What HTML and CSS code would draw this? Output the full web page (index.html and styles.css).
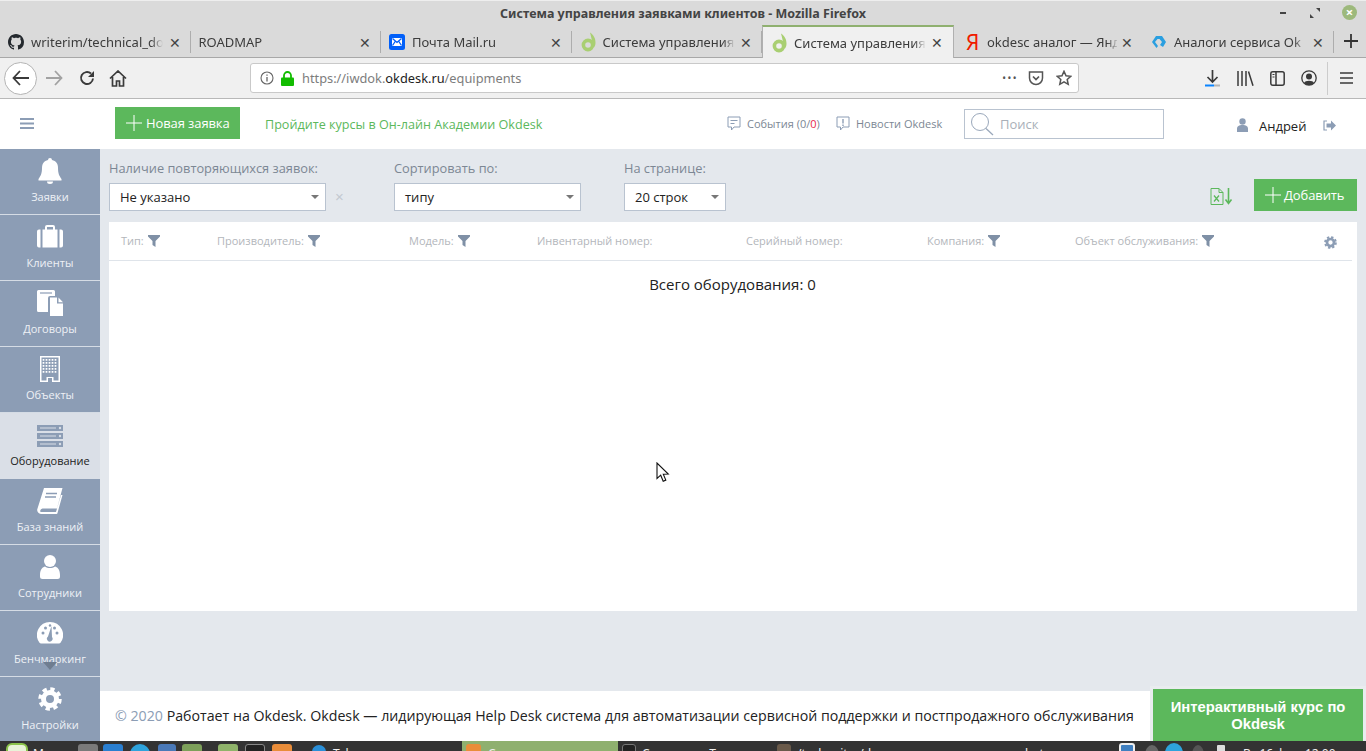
FILE: index.html
```html
<!doctype html>
<html lang="ru">
<head>
    <meta charset="UTF-8">
    <title>Система управления заявками клиентов</title>
    <link rel="stylesheet" href="styles.css">
</head>
<body>
<svg class="sprite" width="0" height="0">
    <symbol id="okd" viewBox="0 0 16 20">
        <circle cx="7" cy="13" r="4.600" fill="none" stroke="#a9cf72" stroke-width="3.600"/>
        <path d="M9 .5c3 2 5.500 5 5.500 10 0 2-.5 3.500-1.500 5l-2-3c.3-4-1-8-2-12z" fill="#a9cf72"/>
    </symbol>
    <symbol id="filter" viewBox="0 0 12 12">
        <path d="M0 0h12v1.500L7.500 6v6l-3-2V6L0 1.500z"/>
    </symbol>
    <symbol id="gear" viewBox="0 0 24 24">
        <circle cx="12" cy="12" r="6.500" fill="none" stroke="currentColor" stroke-width="5"/>
        <circle cx="12" cy="12" r="10" fill="none" stroke="currentColor" stroke-width="3.500" stroke-dasharray="4.300 3.550"/>
    </symbol>
</svg>

<div class="browser">
    <div class="titlebar">
        <span class="title">Система управления заявками клиентов - Mozilla Firefox</span>
        <div class="win-btns">
            <span class="win-min"></span>
            <svg class="win-max" width="10" height="10" viewBox="0 0 10 10"><path d="M6 0h4v4zM0 6l4 4H0z" fill="#444"/></svg>
            <span class="win-close">×</span>
        </div>
    </div>
    <div class="tabs">
        <div class="tab">
            <svg class="tab-icon" viewBox="0 0 16 16"><path fill="#24292e" d="M8 0C3.580 0 0 3.580 0 8c0 3.540 2.290 6.530 5.470 7.590.4.070.55-.17.55-.38 0-.19-.01-.82-.01-1.490-2.010.37-2.530-.49-2.690-.94-.09-.23-.48-.94-.82-1.130-.28-.15-.68-.52-.01-.53.63-.01 1.080.58 1.230.82.72 1.210 1.870.87 2.330.66.07-.52.28-.87.51-1.070-1.780-.2-3.640-.89-3.640-3.950 0-.87.31-1.590.82-2.150-.08-.2-.36-1.020.08-2.120 0 0 .67-.21 2.200.82.64-.18 1.320-.27 2-.27s1.360.09 2 .27c1.530-1.040 2.200-.82 2.200-.82.44 1.100.16 1.920.08 2.120.51.56.82 1.270.82 2.150 0 3.070-1.870 3.750-3.650 3.950.29.25.54.73.54 1.480 0 1.070-.01 1.930-.01 2.200 0 .21.15.46.55.38A8 8 0 0016 8c0-4.420-3.580-8-8-8z"/></svg>
            <span class="tab-title">writerim/technical_do</span>
            <span class="tab-x">✕</span>
        </div>
        <div class="tab">
            <span class="tab-title">ROADMAP</span>
            <span class="tab-x">✕</span>
        </div>
        <div class="tab">
            <svg class="tab-icon" viewBox="0 0 16 16"><rect width="16" height="16" rx="2.500" fill="#005ff9"/><path d="M3 4h10v8H3z" fill="#fff"/><path d="M3.500 4.500 8 8.500l4.500-4M3.500 11.500 6.500 7M12.500 11.500 9.500 7" fill="none" stroke="#005ff9" stroke-width="1.300"/></svg>
            <span class="tab-title">Почта Mail.ru</span>
            <span class="tab-x">✕</span>
        </div>
        <div class="tab">
            <svg class="tab-icon tab-okd"><use href="#okd"/></svg>
            <span class="tab-title">Система управления</span>
            <span class="tab-x">✕</span>
        </div>
        <div class="tab tab-active">
            <svg class="tab-icon tab-okd"><use href="#okd"/></svg>
            <span class="tab-title">Система управления</span>
            <span class="tab-x">✕</span>
        </div>
        <div class="tab tab-nosep">
            <span class="tab-icon ya">Я</span>
            <span class="tab-title">okdesc аналог — Янд</span>
            <span class="tab-x">✕</span>
        </div>
        <div class="tab">
            <svg class="tab-icon" viewBox="0 0 16 16"><path d="M5 2h6l4 6-3 5-3-2 2-3-2.500-3H6.500L4 8l3 4-1.500 2L1 8z" fill="#2a9fe0"/></svg>
            <span class="tab-title">Аналоги сервиса Ok</span>
            <span class="tab-x">✕</span>
        </div>
        <svg class="tab-plus" width="14" height="14" viewBox="0 0 14 14"><path d="M7 0v14M0 7h14" stroke="#333" stroke-width="1.800"/></svg>
    </div>
    <div class="toolbar">
        <span class="back">
            <svg width="18" height="16" viewBox="0 0 18 16"><path d="M8 1 1.500 8 8 15M2 8h15" fill="none" stroke="#3a3a3a" stroke-width="1.800"/></svg>
        </span>
        <svg class="forward" width="18" height="16" viewBox="0 0 18 16"><path d="M10 1l6.500 7L10 15M16 8H1" fill="none" stroke="#a2a2a2" stroke-width="1.800"/></svg>
        <svg class="reload" width="16" height="16" viewBox="0 0 16 16"><path d="M14 8.500A6 6 0 1 1 12 3.500" fill="none" stroke="#3a3a3a" stroke-width="1.900"/><path d="M15 1v6H9z" fill="#3a3a3a"/></svg>
        <svg class="home" width="18" height="17" viewBox="0 0 18 17"><path d="M1 8.500 9 1l8 7.500M3.500 7v9h4v-5h3v5h4V7" fill="none" stroke="#3a3a3a" stroke-width="1.700"/></svg>
        <div class="urlbar">
            <svg class="url-info" width="14" height="14" viewBox="0 0 14 14"><circle cx="7" cy="7" r="6" fill="none" stroke="#666" stroke-width="1.100"/><path d="M7 6v4.500M7 3.500v1.300" stroke="#666" stroke-width="1.300"/></svg>
            <svg class="url-lock" width="13" height="15" viewBox="0 0 13 15"><path d="M3 7V4.500a3.500 3.500 0 0 1 7 0V7" fill="none" stroke="#12bc00" stroke-width="1.800"/><rect y="6.500" width="13" height="8.500" rx="1" fill="#12bc00"/></svg>
            <span class="url-text">https://iwdok.<b>okdesk.ru</b>/equipments</span>
            <span class="url-dots">•••</span>
            <svg class="url-pocket" width="16" height="15" viewBox="0 0 16 15"><path d="M1.500 1h13v6a6.500 6.500 0 0 1-13 0z" fill="none" stroke="#555" stroke-width="1.500"/><path d="M5 5.500l3 3 3-3" fill="none" stroke="#555" stroke-width="1.700"/></svg>
            <svg class="url-star" width="16" height="16" viewBox="0 0 16 16"><path d="M8 1.300l2 4.500 4.800.5-3.600 3.200 1 4.800L8 11.800l-4.200 2.500 1-4.800L1.200 6.300 6 5.800z" fill="none" stroke="#555" stroke-width="1.500"/></svg>
        </div>
        <svg class="tb-download" width="15" height="18" viewBox="0 0 15 18"><path d="M7.500 1v11M2.500 8l5 5 5-5" fill="none" stroke="#3a3a3a" stroke-width="1.700"/><path d="M0 16.500h9" stroke="#0a84ff" stroke-width="2"/><path d="M9 16.500h6" stroke="#b5b5b5" stroke-width="2"/></svg>
        <svg class="tb-library" width="17" height="15" viewBox="0 0 17 15"><path d="M1 0v15M5 0v15M9 0v15M11.500.5l4.500 14.200" fill="none" stroke="#3a3a3a" stroke-width="1.500"/></svg>
        <svg class="tb-sidebar" width="15" height="15" viewBox="0 0 15 15"><rect x=".8" y=".8" width="13.400" height="13.400" rx="2" fill="none" stroke="#3a3a3a" stroke-width="1.500"/><path d="M6 1v13" stroke="#3a3a3a" stroke-width="1.500"/><path d="M2.500 3.500h2M2.500 6h2" stroke="#3a3a3a"/></svg>
        <svg class="tb-account" width="16" height="16" viewBox="0 0 16 16"><circle cx="8" cy="8" r="7.200" fill="none" stroke="#3a3a3a" stroke-width="1.300"/><circle cx="8" cy="6.500" r="3" fill="#3a3a3a"/><path d="M3 13c1-3 9-3 10 0l-2.500 2h-5z" fill="#3a3a3a"/></svg>
        <span class="tb-sep"></span>
        <svg class="tb-menu" width="13" height="12" viewBox="0 0 13 12"><path d="M0 1h13M0 6h13M0 11h13" stroke="#3a3a3a" stroke-width="1.600"/></svg>
    </div>
</div>

<div class="app">
    <header class="top">
        <svg class="burger" width="14" height="11" viewBox="0 0 14 11"><path d="M0 1h14M0 5.500h14M0 10h14" stroke="#8c9db5" stroke-width="2"/></svg>
        <a class="btn btn-new">
            <svg width="16" height="16" viewBox="0 0 16 16"><path d="M8 0v16M0 8h16" stroke="#fff"/></svg>
            Новая заявка
        </a>
        <a class="academy">Пройдите курсы в Он-лайн Академии Okdesk</a>
        <div class="top-link top-events">
            <svg width="14" height="15" viewBox="0 0 14 15"><path d="M1 1h12v10H7l-2.500 3V11H1z" fill="none" stroke="#8c9db5"/><path d="M3.500 4.500h7M3.500 7.500h4" stroke="#8c9db5"/></svg>
            <span>События (0/<i>0</i>)</span>
        </div>
        <div class="top-link top-news">
            <svg width="14" height="15" viewBox="0 0 14 15"><path d="M1 1h12v10H7l-2.500 3V11H1z" fill="none" stroke="#8c9db5"/><path d="M7 3v4.500M7 8.500V10" stroke="#8c9db5" stroke-width="1.400"/></svg>
            <span>Новости Okdesk</span>
        </div>
        <div class="search">
            <svg width="24" height="24" viewBox="0 0 24 24"><circle cx="10" cy="10" r="8.500" fill="none" stroke="#9aa8bb"/><path d="M16 16.500l7 6.500" stroke="#9aa8bb" stroke-width="1.300"/></svg>
            <span>Поиск</span>
        </div>
        <svg class="user-ico" width="11" height="14" viewBox="0 0 11 14"><circle cx="5.500" cy="3.500" r="3.200" fill="#8c9db5"/><path d="M0 14v-3c0-3 2-4 5.500-4S11 8 11 11v3z" fill="#8c9db5"/></svg>
        <span class="user-name">Андрей</span>
        <svg class="exit-ico" width="13" height="11" viewBox="0 0 13 11"><path d="M4 1H1v9h3" fill="none" stroke="#8c9db5" stroke-width="1.200"/><path d="M3.500 3.500H8V.5l5 5-5 5v-3H3.500z" fill="#8c9db5"/></svg>
    </header>

    <div class="app-body">
        <nav class="side">
            <a class="nav-item">
                <svg width="26" height="26" viewBox="0 0 26 26"><path d="M13 0a2 2 0 0 1 2 2c4 1 6 3.500 6 8 0 6 1.500 8 3.500 11v1.500h-23V21C3.500 18 5 16 5 10c0-4.500 2-7 6-8a2 2 0 0 1 2-2zM10 23.500h6a3 2.500 0 0 1-6 0z" fill="#fff"/></svg>
                Заявки
            </a>
            <a class="nav-item">
                <svg width="26" height="26" viewBox="0 0 26 26"><path d="M3.500 5.500v18H2a2 2 0 0 1-2-2v-14a2 2 0 0 1 2-2zM22.500 5.500H24a2 2 0 0 1 2 2v14a2 2 0 0 1-2 2h-1.500zM5.500 5.500H8V3a2 2 0 0 1 2-2h6a2 2 0 0 1 2 2v2.500h2.500v18h-15zM10 5.500h6V3h-6z" fill="#fff"/></svg>
                Клиенты
            </a>
            <a class="nav-item">
                <svg width="26" height="26" viewBox="0 0 26 26"><path d="M1.500 0h15A1.500 1.500 0 0 1 18 1.500V6h-5a2 2 0 0 0-2 2v14H1.500A1.500 1.500 0 0 1 0 20.500v-19A1.500 1.500 0 0 1 1.500 0z" fill="#fff"/><path d="M13 7.500h7v6h6V26H13zM21.500 7.500l4.500 4.700h-4.500z" fill="#fff"/><path d="M3 3h12" stroke="#8c9db5" stroke-width="1.200"/></svg>
                Договоры
            </a>
            <a class="nav-item">
                <svg width="22" height="26" viewBox="0 0 22 26"><path d="M1 0h20v26H13v-4H9v4H1z" fill="#fff"/><path d="M2.500 1.500h17v23h-5V21h-7v3.500h-5z" fill="#8c9db5"/><path d="M4.500 3v15M7.500 3v15M10.500 3v15M13.500 3v15M16.500 3v15" stroke="#fff" stroke-width="1.700" stroke-dasharray="1.700 1.300"/></svg>
                Объекты
            </a>
            <a class="nav-item nav-active">
                <svg width="26" height="22" viewBox="0 0 26 22"><path d="M0 0h26v6H0zM0 8h26v6H0zM0 16h26v6H0z" fill="#8c9db5"/><path d="M3 3h16M3 11h16M3 19h16" stroke="#dadfe7"/><circle cx="23" cy="3" r="1.200" fill="#dadfe7"/><circle cx="23" cy="11" r="1.200" fill="#dadfe7"/><circle cx="23" cy="19" r="1.200" fill="#dadfe7"/></svg>
                Оборудование
            </a>
            <a class="nav-item">
                <svg width="26" height="26" viewBox="0 0 26 26"><path d="M7 0h18.500L20 20.500H5.500A2.500 2.500 0 0 0 3.500 24H19l5-17h1.500L20.500 25a1.200 1.200 0 0 1-1 1H4a4 4 0 0 1-3.800-4.500z" fill="#fff"/><path d="M9 5.500h11M8 9h11" stroke="#8c9db5" stroke-width="1.500"/></svg>
                База знаний
            </a>
            <a class="nav-item">
                <svg width="20" height="24" viewBox="0 0 20 24"><circle cx="10" cy="6" r="6" fill="#fff"/><path d="M0 20c0-6 3-8 5-8.500 3 2 7 2 10 0 2 .5 5 2.500 5 8.500v1.500a2.500 2.500 0 0 1-2.500 2.500h-15A2.500 2.500 0 0 1 0 21.500z" fill="#fff"/></svg>
                Сотрудники
            </a>
            <a class="nav-item">
                <svg width="26" height="22" viewBox="0 0 26 22"><path d="M13 0a13 13 0 0 1 10.500 20.700 2 2 0 0 1-1.500.8H4a2 2 0 0 1-1.500-.8A13 13 0 0 1 13 0z" fill="#fff"/><circle cx="6" cy="11" r="1.500" fill="#8c9db5"/><circle cx="8.500" cy="6" r="1.500" fill="#8c9db5"/><circle cx="20" cy="11" r="1.500" fill="#8c9db5"/><circle cx="17.500" cy="6" r="1.500" fill="#8c9db5"/><circle cx="13" cy="3.500" r="1.200" fill="#8c9db5"/><path d="M14.500 4 15 15a2.800 2.800 0 1 1-4-.5z" fill="#8c9db5"/></svg>
                Бенчмаркинг
            </a>
            <a class="nav-item">
                <svg class="nav-gear" width="24" height="24"><use href="#gear"/></svg>
                Настройки
            </a>
            <span class="side-more"></span>
        </nav>

        <main class="main">
            <div class="content">
                <div class="filters">
                    <div class="field field-repeat">
                        <label>Наличие повторяющихся заявок:</label>
                        <div class="select">Не указано</div>
                    </div>
                    <span class="clear">×</span>
                    <div class="field field-sort">
                        <label>Сортировать по:</label>
                        <div class="select">типу</div>
                    </div>
                    <div class="field field-page">
                        <label>На странице:</label>
                        <div class="select">20 строк</div>
                    </div>
                    <svg class="excel" width="23" height="17" viewBox="0 0 23 17"><path d="M1 .5h8l4 4v12H1zM9 .5v4h4" fill="none" stroke="#5cb85c"/><path d="M4 7.500l5 6M9 7.500l-5 6" stroke="#5cb85c" stroke-width="1.300"/><path d="M18.500 0v15M15.500 11.500l3 4 3-4" fill="none" stroke="#5cb85c" stroke-width="1.600"/></svg>
                    <a class="btn btn-add">
                        <svg width="16" height="16" viewBox="0 0 16 16"><path d="M8 0v16M0 8h16" stroke="#fff"/></svg>
                        Добавить
                    </a>
                </div>
                <div class="panel">
                    <div class="thead">
                        <div class="th">Тип:<svg><use href="#filter"/></svg></div>
                        <div class="th">Производитель:<svg><use href="#filter"/></svg></div>
                        <div class="th">Модель:<svg><use href="#filter"/></svg></div>
                        <div class="th">Инвентарный номер:</div>
                        <div class="th">Серийный номер:</div>
                        <div class="th">Компания:<svg><use href="#filter"/></svg></div>
                        <div class="th">Объект обслуживания:<svg><use href="#filter"/></svg></div>
                        <svg class="th-gear"><use href="#gear"/></svg>
                    </div>
                    <div class="total">Всего оборудования: 0</div>
                </div>
            </div>
            <footer class="foot">
                <span class="copy">© 2020</span> Работает на Okdesk. Okdesk — лидирующая Help Desk система для автоматизации сервисной поддержки и постпродажного обслуживания
            </footer>
        </main>
    </div>
</div>

<div class="taskbar">
    <span class="task-logo"></span>
    <span class="task-text task-menu">Меню</span>
    <span class="task-ico ico-key"></span>
    <span class="task-ico ico-code"></span>
    <span class="task-ico ico-tg"></span>
    <span class="task-ico ico-blue"></span>
    <span class="task-ico ico-green"></span>
    <span class="task-ico ico-files"></span>
    <span class="task-ico ico-term"></span>
    <span class="task-ico ico-orange"></span>
    <span class="task-ico ico-round"></span>
    <span class="task-text task-tele">Telegram</span>
    <span class="task-win">
        <span class="task-ico ico-orange2"></span>
        <span class="task-text">Система управления</span>
    </span>
    <span class="task-ico ico-term2"></span>
    <span class="task-text task-w1">Система — Терминал</span>
    <span class="task-ico ico-vlc"></span>
    <span class="task-text task-w2">/techwriter/docs</span>
    <span class="task-text task-w3">screenshots</span>
    <span class="task-ico ico-shield"></span>
    <span class="task-ico ico-grey"></span>
    <span class="task-ico ico-tg2"></span>
    <span class="task-ico ico-grey2"></span>
    <span class="task-ico ico-batt"></span>
    <span class="task-text task-clock">Вт 16 фев, 12:00</span>
</div>

<a class="course">Интерактивный курс по Okdesk</a>
<svg class="cursor" width="14" height="21" viewBox="0 0 14 21"><path d="M1 1v15.500l3.700-3.300 2.500 6 2.600-1.100-2.500-5.800 5-.3z" fill="#fff" stroke="#111" stroke-width="1.100"/></svg>
</body>
</html>
```

FILE: styles.css
```css
html, body {
    margin: 0;
    height: 751px;
    overflow: hidden;
}
body {
    display: flex;
    flex-direction: column;
    font-family: "Open Sans", sans-serif;
    background: #fff;
    position: relative;
}
a {
    text-decoration: none;
}
.sprite {
    position: absolute;
}

/* browser window */
.browser {
    font-family: "Noto Sans", sans-serif;
    font-size: 13px;
    color: #3c3c3c;
    flex: none;
}
.titlebar {
    height: 25px;
    background: #dadada;
    border-top: 1px solid #eee;
    box-sizing: border-box;
    display: flex;
    align-items: center;
    justify-content: center;
    position: relative;
}
.title {
    font-weight: 700;
    font-size: 12.500px;
    color: #444;
}
.win-btns {
    position: absolute;
    right: 9px;
    top: 4px;
    display: flex;
    align-items: center;
}
.win-min {
    width: 6px;
    height: 2px;
    background: #444;
    margin-right: 24px;
}
.win-max {
    margin-right: 22px;
}
.win-close {
    width: 15px;
    height: 15px;
    border-radius: 50%;
    background: #9db97c;
    color: #fff;
    font-size: 13px;
    line-height: 15px;
    text-align: center;
    font-weight: 700;
}
.tabs {
    height: 33px;
    background: #dadada;
    border-bottom: 1px solid #a8a8a8;
    box-sizing: border-box;
    display: flex;
    align-items: stretch;
}
.tab {
    width: 190.500px;
    box-sizing: border-box;
    display: flex;
    align-items: center;
    padding: 0 9px 0 8px;
    position: relative;
    margin-top: 2px;
}
.tab::after {
    content: "";
    position: absolute;
    right: 0;
    top: 4px;
    bottom: 4px;
    width: 1px;
    background: #adadad;
}
.tab-active {
    background: #f0f0f0;
    border-top: 2px solid #8fb06f;
    margin-top: 0;
    height: 33px;
    border-left: 1px solid #b0b0b0;
    border-right: 1px solid #b0b0b0;
    width: 192px;
}
.tab-active::after, .tab-nosep::after {
    display: none;
}
.tab-nosep {
    width: 189px;
}
.tab-nosep + .tab {
    width: 191px;
}
.tab-icon {
    width: 16px;
    height: 16px;
    flex: none;
    margin-right: 7px;
}
.tab-okd {
    height: 20px;
    margin: 0 6px 0 1px;
}
.tab-title {
    flex: 1;
    min-width: 0;
    white-space: nowrap;
    -webkit-mask-image: linear-gradient(to right, #000 120px, transparent 132px);
    mask-image: linear-gradient(to right, #000 120px, transparent 132px);
}
.tab-x {
    font-size: 14px;
    width: 13px;
    margin-left: 4px;
    color: #444;
}
.ya {
    color: #f01b00;
    font-size: 21px;
    line-height: 16px;
    width: 11px;
    margin: 0 10px 0 4px;
}
.tab-plus {
    margin: 9px 0 0 10px;
}
.toolbar {
    height: 41px;
    box-sizing: border-box;
    background: #f0f0f0;
    border-bottom: 1px solid #b8b8b8;
    display: flex;
    align-items: center;
}
.back {
    width: 33px;
    height: 33px;
    margin-left: 4px;
    box-sizing: border-box;
    border: 1px solid #b4b4b4;
    border-radius: 50%;
    background: #fff;
    display: flex;
    align-items: center;
    justify-content: center;
}
.forward {
    margin-left: 8px;
}
.reload {
    margin-left: 16px;
}
.home {
    margin-left: 14px;
}
.urlbar {
    width: 829px;
    height: 30px;
    margin-left: 123px;
    background: #fff;
    border: 1px solid #c9c9c9;
    border-radius: 3px;
    box-sizing: border-box;
    display: flex;
    align-items: center;
    font-size: 12.800px;
    color: #7d7d7d;
}
.url-info {
    margin-left: 9px;
}
.url-lock {
    margin-left: 7px;
}
.url-text {
    margin-left: 8px;
    flex: 1;
}
.url-text b {
    font-weight: 400;
    color: #222;
}
.url-dots {
    font-size: 10px;
    letter-spacing: 1.500px;
    color: #555;
}
.url-pocket {
    margin-left: 10px;
}
.url-star {
    margin: 0 6px 0 12px;
}
.tb-download {
    margin-left: 126px;
}
.tb-library {
    margin-left: 17px;
}
.tb-sidebar {
    margin-left: 16px;
}
.tb-account {
    margin-left: 16px;
}
.tb-sep {
    width: 1px;
    height: 33px;
    background: #ccc;
    margin-left: 10px;
}
.tb-menu {
    margin-left: 12px;
}

/* okdesk page */
.app {
    flex: 1;
    min-height: 0;
    display: flex;
    flex-direction: column;
}
.top {
    height: 50px;
    flex: none;
    display: flex;
    align-items: center;
    background: #fff;
    font-size: 11px;
    color: #7c8794;
}
.burger {
    margin: 0 0 2px 20px;
}
.btn {
    background: #5cb85c;
    color: #fff;
    display: flex;
    align-items: center;
    box-sizing: border-box;
    font-size: 13px;
    letter-spacing: -.1px;
}
.btn-new {
    width: 125px;
    height: 32px;
    margin-left: 81px;
    padding-left: 11px;
    gap: 4px;
    margin-bottom: 2px;
}
.academy {
    margin-left: 25px;
    font-size: 12.600px;
    color: #5cb85c;
    width: 462px;
}
.top-link {
    display: flex;
    align-items: center;
    gap: 6px;
    margin-bottom: 2px;
}
.top-link i {
    font-style: normal;
    color: #e8294a;
}
.top-events {
    width: 109px;
}
.top-news {
    width: 128px;
}
.search {
    width: 200px;
    height: 30px;
    box-sizing: border-box;
    border: 1px solid #b9c3d0;
    display: flex;
    align-items: center;
    padding-left: 5px;
    gap: 6px;
    font-size: 13px;
    color: #a9b0b9;
}
.user-ico {
    margin: 1px 0 0 73px;
}
.user-name {
    margin: 3px 0 0 11px;
    font-size: 13px;
    color: #222;
}
.exit-ico {
    margin: 2px 0 0 17px;
}
.app-body {
    flex: 1;
    min-height: 0;
    display: flex;
}
.side {
    width: 100px;
    flex: none;
    overflow: hidden;
    position: relative;
    background: #8c9db5;
}
.nav-item {
    height: 66px;
    box-sizing: border-box;
    border-bottom: 1px solid #d5dce5;
    display: flex;
    flex-direction: column;
    align-items: center;
    font-size: 11px;
    color: #eef1f5;
    line-height: 15px;
}
.nav-item svg {
    height: 26px;
    margin: 9px 0 5px;
    flex: none;
}
.nav-active {
    background: #dadfe7;
    color: #222;
    border-bottom: 0;
}
.nav-active svg {
    margin-top: 12px;
    margin-bottom: 6px;
    height: 22px;
}
.nav-gear {
    color: #fff;
}
.side-more {
    position: absolute;
    left: 43px;
    top: 513px;
    border: 7px solid transparent;
    border-top: 8px solid #6f7d90;
    border-bottom: 0;
}
.main {
    flex: 1;
    min-width: 0;
    display: flex;
    flex-direction: column;
}
.content {
    flex: 1;
    background: #e4e8ed;
    padding: 0 9px;
}
.filters {
    height: 73px;
    display: flex;
    align-items: flex-end;
    padding-bottom: 11px;
    box-sizing: border-box;
}
.field label {
    display: block;
    font-size: 12.800px;
    color: #7c8794;
    line-height: 18px;
    margin-bottom: 6px;
    white-space: nowrap;
}
.select {
    height: 28px;
    box-sizing: border-box;
    border: 1px solid #b9c3d0;
    background: #fff;
    font-size: 13px;
    line-height: 26px;
    padding-left: 10px;
    color: #222;
    position: relative;
}
.select::after {
    content: "";
    position: absolute;
    right: 6px;
    top: 11px;
    border: 4px solid transparent;
    border-top: 4px solid #777;
    border-bottom: 0;
    border-left-width: 4.500px;
    border-right-width: 4.500px;
}
.field-repeat {
    width: 217px;
}
.clear {
    width: 68px;
    text-align: left;
    padding-left: 9px;
    box-sizing: border-box;
    font-size: 15px;
    line-height: 28px;
    color: #c3c9d1;
    font-family: "Liberation Sans", sans-serif;
}
.field-sort {
    width: 187px;
    margin-right: 43px;
}
.field-page {
    width: 102px;
}
.excel {
    margin: 0 21px 6px 484px;
}
.btn-add {
    width: 103px;
    height: 32px;
    padding-left: 11px;
    gap: 3px;
}
.panel {
    background: #fff;
    height: 389px;
}
.thead {
    height: 38px;
    margin-right: 5px;
    border-bottom: 1px solid #dfe4ea;
    padding-left: 12px;
    display: grid;
    grid-template-columns: 96px 192px 128px 209px 181px 148px 250px 1fr;
    align-items: center;
    font-size: 11px;
    color: #b3b6bb;
}
.th {
    display: flex;
    align-items: center;
    margin-bottom: 1px;
}
.th svg {
    width: 12px;
    height: 12px;
    margin-left: 4px;
    fill: #7f90a6;
}
.th-gear {
    width: 13px;
    height: 13px;
    margin-left: -1px;
    color: #8c9db5;
    margin-top: 3px;
}
.total {
    text-align: center;
    font-size: 15px;
    color: #222;
    margin-top: 14px;
    padding-right: 1px;
    line-height: 19px;
}
.foot {
    height: 50px;
    flex: none;
    background: #fff;
    font-size: 14.200px;
    color: #222;
    line-height: 50px;
    padding-left: 15px;
    white-space: nowrap;
}
.copy {
    color: #8c9db5;
}

/* over the page */
.course {
    position: absolute;
    right: 0;
    top: 686px;
    width: 216px;
    height: 65px;
    box-sizing: border-box;
    border: 3px solid #e9ecef;
    background: #5cb85c;
    color: #fff;
    font-family: "Liberation Sans", sans-serif;
    font-weight: 700;
    font-size: 14.800px;
    line-height: 17px;
    text-align: center;
    padding: 10px 8px 0;
}
.cursor {
    position: absolute;
    left: 656px;
    top: 462px;
}

/* desktop panel, only the top is on screen */
.taskbar {
    height: 10px;
    flex: none;
    background: #333;
    display: flex;
    overflow: hidden;
    position: relative;
    z-index: 2;
    align-items: flex-start;
    font-family: "Noto Sans", sans-serif;
}
.task-text {
    color: #f0f0f0;
    font-size: 12px;
    line-height: 16px;
    margin-top: 5px;
    white-space: nowrap;
}
.task-ico {
    width: 20px;
    height: 20px;
    border-radius: 3px;
    flex: none;
    margin-top: 3px;
}
.task-logo {
    width: 22px;
    height: 20px;
    margin: 2px 0 0 6px;
    box-sizing: border-box;
    border: 2px solid #8bc34a;
    border-radius: 6px;
    background: #e8f3d8;
    flex: none;
}
.task-menu {
    margin-left: 5px;
    width: 45px;
    flex: none;
}
.ico-key {
    background: #7a7a7a;
}
.ico-code {
    background: #2a7fd0;
    margin-left: 5px;
}
.ico-tg {
    background: #2ea3dc;
    border-radius: 50%;
    margin-left: 7px;
}
.ico-blue {
    background: #4a79b8;
    margin-left: 8px;
    width: 18px;
}
.ico-green {
    background: #7da05a;
    margin-left: 6px;
}
.ico-files {
    background: #8fb36a;
    margin-left: 16px;
}
.ico-term {
    background: #222;
    border: 1px solid #888;
    box-sizing: border-box;
    margin-left: 7px;
}
.ico-orange {
    background: #e98d3a;
    margin-left: 7px;
}
.ico-round {
    background: #2a8fd8;
    border-radius: 50%;
    width: 14px;
    height: 14px;
    margin: 4px 0 0 20px;
}
.task-tele {
    margin-left: 7px;
    width: 129px;
    flex: none;
}
.task-win {
    width: 156px;
    height: 10px;
    background: #8fb06f;
    display: flex;
    flex: none;
}
.task-win .task-text {
    margin-left: 7px;
}
.ico-orange2 {
    width: 15px;
    height: 15px;
    background: #e98d3a;
    margin: 3px 0 0 4px;
}
.ico-term2 {
    width: 14px;
    height: 15px;
    background: #222;
    border: 1px solid #777;
    box-sizing: border-box;
    margin-left: 4px;
}
.task-w1 {
    margin-left: 6px;
    width: 137px;
    flex: none;
}
.ico-vlc {
    width: 14px;
    height: 14px;
    background: #6a5a4a;
    margin-left: -2px;
}
.task-w2 {
    width: 145px;
    margin-left: 6px;
    flex: none;
}
.task-w3 {
    width: 177px;
    padding-left: 40px;
    box-sizing: border-box;
    flex: none;
}
.ico-shield {
    width: 16px;
    height: 16px;
    background: #3f7fc0;
    border: 2px solid #eee;
    box-sizing: border-box;
    margin-top: 2px;
}
.ico-grey {
    width: 14px;
    background: #666;
    border-radius: 50%;
    margin: 4px 0 0 10px;
}
.ico-tg2 {
    width: 18px;
    background: #2ea3dc;
    border-radius: 50%;
    margin: 2px 0 0 6px;
}
.ico-grey2 {
    width: 12px;
    background: #555;
    border-radius: 50%;
    margin: 4px 0 0 9px;
}
.ico-batt {
    width: 8px;
    background: #ddd;
    margin: 4px 0 0 13px;
    border-radius: 1px;
}
.task-clock {
    margin-left: 18px;
}
```
